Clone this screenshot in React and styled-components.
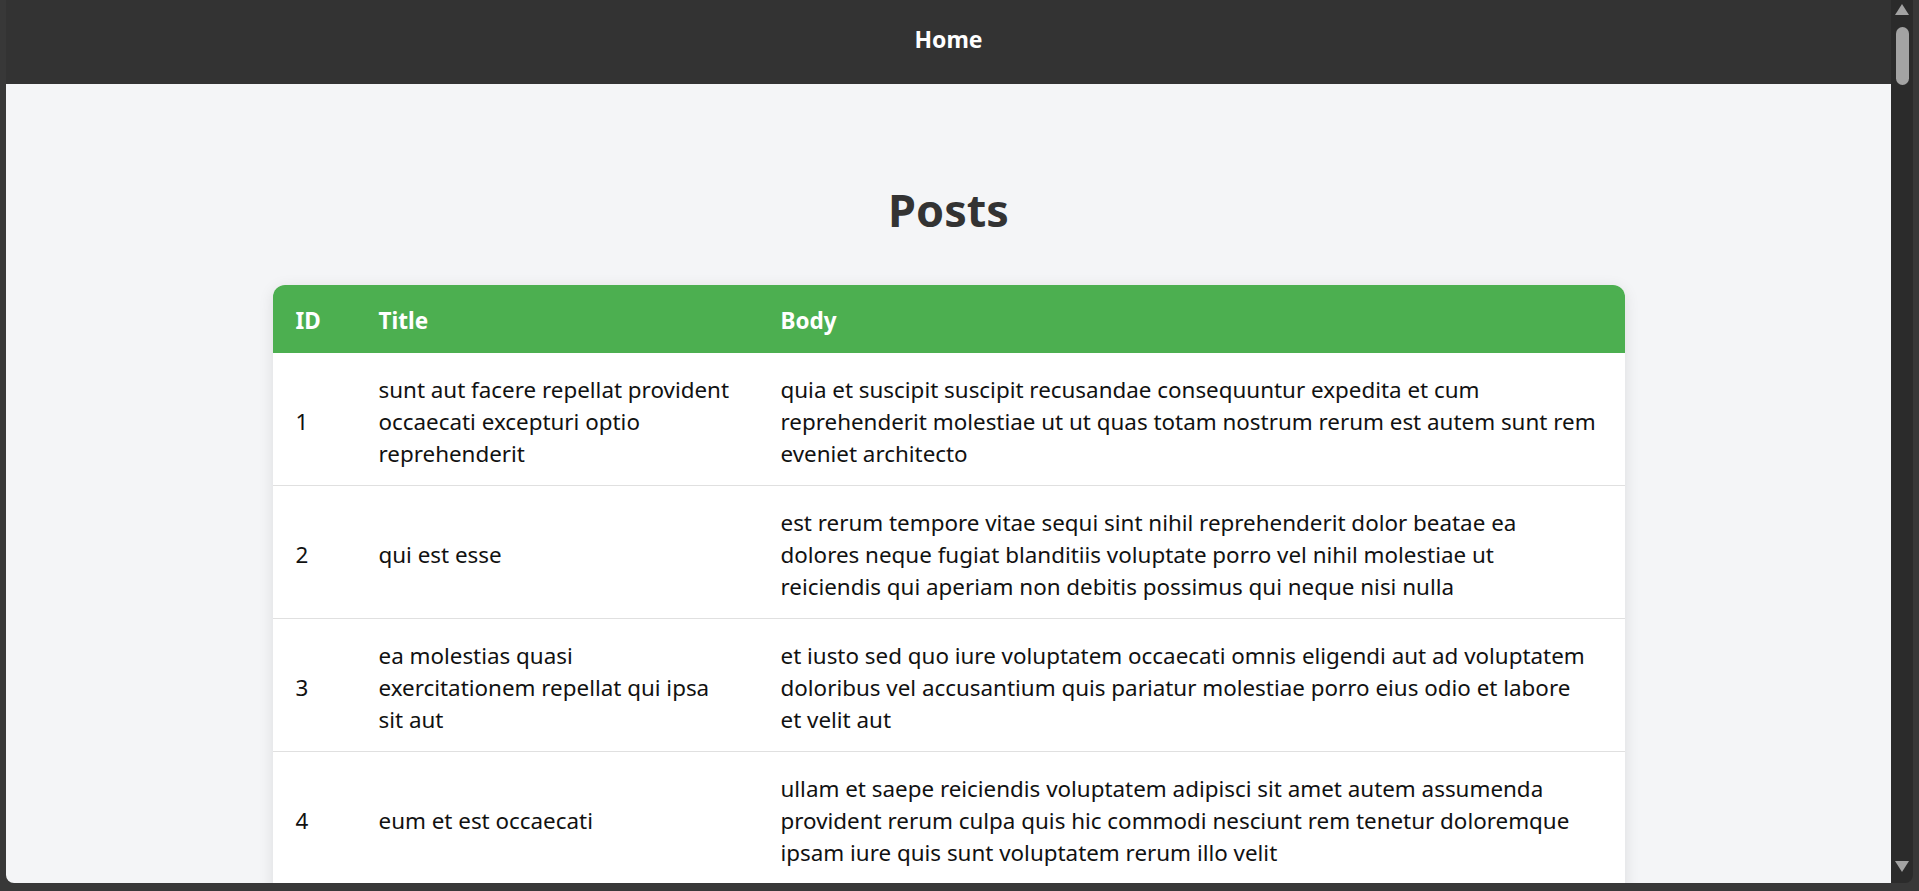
import React from 'react';
import styled, { createGlobalStyle } from 'styled-components';

const posts = [
  {
    id: 1,
    title: 'sunt aut facere repellat provident occaecati excepturi optio reprehenderit',
    body: 'quia et suscipit suscipit recusandae consequuntur expedita et cum reprehenderit molestiae ut ut quas totam nostrum rerum est autem sunt rem eveniet architecto',
  },
  {
    id: 2,
    title: 'qui est esse',
    body: 'est rerum tempore vitae sequi sint nihil reprehenderit dolor beatae ea dolores neque fugiat blanditiis voluptate porro vel nihil molestiae ut reiciendis qui aperiam non debitis possimus qui neque nisi nulla',
  },
  {
    id: 3,
    title: 'ea molestias quasi exercitationem repellat qui ipsa sit aut',
    body: 'et iusto sed quo iure voluptatem occaecati omnis eligendi aut ad voluptatem doloribus vel accusantium quis pariatur molestiae porro eius odio et labore et velit aut',
  },
  {
    id: 4,
    title: 'eum et est occaecati',
    body: 'ullam et saepe reiciendis voluptatem adipisci sit amet autem assumenda provident rerum culpa quis hic commodi nesciunt rem tenetur doloremque ipsam iure quis sunt voluptatem rerum illo velit',
  },
  {
    id: 5,
    title: 'nesciunt quas odio',
    body: 'repudiandae veniam quaerat sunt sed alias aut fugiat sit autem sed est voluptatem omnis possimus esse voluptatibus quis est aut tenetur dolor neque',
  },
];

const GlobalStyle = createGlobalStyle`
  html, body {
    margin: 0;
    padding: 0;
    overflow: hidden;
  }
  body {
    font-family: "Noto Sans", "Open Sans", sans-serif;
    background: #3a3a3a;
  }
`;

export default function App() {
  return (
    <>
      <GlobalStyle />
      <Window>
        <Viewport>
          <Header>Home</Header>
          <Main>
            <Heading>Posts</Heading>
            <Table>
              <colgroup>
                <col style={{ width: 83 }} />
                <col style={{ width: 402 }} />
                <col />
              </colgroup>
              <thead>
                <tr>
                  <Th>ID</Th>
                  <Th>Title</Th>
                  <Th>Body</Th>
                </tr>
              </thead>
              <tbody>
                {posts.map((post) => (
                  <Row key={post.id}>
                    <Td>{post.id}</Td>
                    <Td>{post.title}</Td>
                    <Td $wide>{post.body}</Td>
                  </Row>
                ))}
              </tbody>
            </Table>
          </Main>
        </Viewport>
        <Scrollbar>
          <Arrow />
          <Thumb />
          <Spacer />
          <Arrow $down />
        </Scrollbar>
      </Window>
    </>
  );
}

const Window = styled.div`
  display: flex;
  height: 891px;
  box-sizing: border-box;
  padding: 0 6px 8px 6px;
  background: #383838;
`;

const Viewport = styled.div`
  flex: 1;
  display: flex;
  flex-direction: column;
  overflow: hidden;
  background: #f4f5f7;
  border-bottom-left-radius: 8px;
`;

const Header = styled.header`
  flex: none;
  height: 84px;
  display: flex;
  align-items: center;
  justify-content: center;
  padding-bottom: 6px;
  box-sizing: border-box;
  background: #333;
  color: #fff;
  font-size: 23px;
  font-weight: 700;
`;

const Main = styled.main`
  padding-top: 94px;
  display: flex;
  flex-direction: column;
  align-items: center;
`;

const Heading = styled.h1`
  margin: 0 0 43px;
  font-size: 45px;
  line-height: 64px;
  font-weight: 700;
  color: #333;
`;

const Table = styled.table`
  width: 1352px;
  table-layout: fixed;
  border-collapse: collapse;
  background: #fff;
  border-radius: 12px;
  overflow: hidden;
  box-shadow: 0 3px 15px rgba(0, 0, 0, 0.1);
`;

const Th = styled.th`
  padding: 20px 23px 16px;
  background: #4caf50;
  color: #fff;
  text-align: left;
  font-size: 22.5px;
  line-height: 32px;
  font-weight: 700;
`;

const Row = styled.tr`
  border-bottom: 1px solid #e0e0e0;
`;

const Td = styled.td`
  padding: 21px ${(p) => (p.$wide ? '28px' : '23px')} 15px 23px;
  vertical-align: middle;
  font-size: 22.4px;
  line-height: 32px;
  color: #111;
`;

const Scrollbar = styled.div`
  flex: none;
  width: 22px;
  display: flex;
  flex-direction: column;
  align-items: center;
  padding: 4px 0 11px;
  box-sizing: border-box;
  background: #2b2b2b;
  border-bottom-right-radius: 8px;
`;

const Arrow = styled.div`
  width: 0;
  height: 0;
  border-left: 7.5px solid transparent;
  border-right: 7.5px solid transparent;
  ${(p) => (p.$down ? 'border-top: 11px solid #a3a3a3;' : 'border-bottom: 11px solid #a3a3a3;')}
`;

const Thumb = styled.div`
  margin-top: 12px;
  width: 13px;
  height: 58px;
  border-radius: 7px;
  background: #a3a3a3;
`;

const Spacer = styled.div`
  flex: 1;
`;
